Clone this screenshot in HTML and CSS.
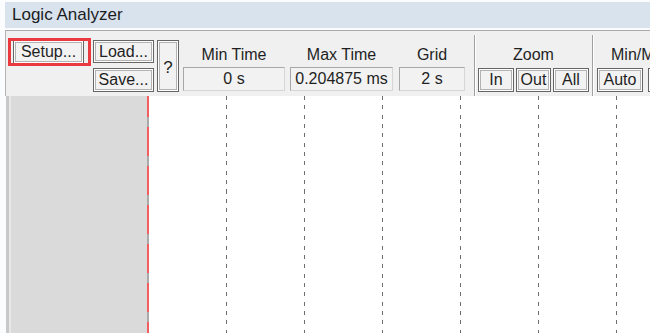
FILE: index.html
```html
<!DOCTYPE html>
<html lang="en">
<head>
  <meta charset="UTF-8">
  <title>Logic Analyzer</title>
  <link rel="stylesheet" href="styles.css">
</head>
<body>

  <div class="window">
    <div class="titlebar">Logic Analyzer</div>

    <div class="toolbar">
      <div class="setup-wrap">
        <button class="btn btn-setup">Setup...</button>
        <span class="highlight"></span>
      </div>

      <div class="load-save">
        <button class="btn btn-file">Load...</button>
        <button class="btn btn-file btn-save">Save...</button>
      </div>

      <button class="btn btn-help">?</button>

      <div class="group group-min">
        <span class="label">Min Time</span>
        <span class="field">0 s</span>
      </div>
      <div class="group group-max">
        <span class="label">Max Time</span>
        <span class="field">0.204875 ms</span>
      </div>
      <div class="group group-grid">
        <span class="label">Grid</span>
        <span class="field">2 s</span>
      </div>

      <div class="sep sep-zoom"></div>

      <div class="group group-zoom">
        <span class="label">Zoom</span>
        <div class="btn-row">
          <button class="btn btn-small btn-in">In</button>
          <button class="btn btn-small btn-out">Out</button>
          <button class="btn btn-small btn-all">All</button>
        </div>
      </div>

      <div class="sep sep-minmax"></div>

      <div class="group group-minmax">
        <span class="label">Min/Max</span>
        <div class="btn-row btn-row-wide">
          <button class="btn btn-small btn-auto">Auto</button>
          <button class="btn btn-small btn-undo">Undo</button>
        </div>
      </div>
    </div>

    <div class="plot">
      <div class="signals"></div>
      <div class="cursor"></div>
      <div class="waves">
        <div class="grid-col"></div>
        <div class="grid-col"></div>
        <div class="grid-col"></div>
        <div class="grid-col"></div>
        <div class="grid-col"></div>
        <div class="grid-col"></div>
        <div class="grid-col"></div>
      </div>
    </div>
  </div>

</body>
</html>
```

FILE: styles.css
```css
* {
  margin: 0;
  padding: 0;
  box-sizing: border-box;
}

body {
  font-family: 'Liberation Sans', Arial, sans-serif;
  background-color: #fbfcfd;
  width: 650px;
  height: 333px;
  overflow: hidden;
  color: #1f1f1f;
}

.window {
  width: 820px;
  height: 333px;
  margin-left: 5px;
  display: flex;
  flex-direction: column;
}

.titlebar {
  margin-top: 2px;
  height: 26px;
  line-height: 26px;
  padding-left: 7px;
  font-size: 17px;
  color: #1c1c1c;
  background-color: #d9e3ee;
}

.toolbar {
  margin-top: 2px;
  height: 66px;
  display: flex;
  align-items: flex-start;
  padding: 9px 0 0 7px;
  background-color: #f0f0f0;
  border-top: 1px solid #a9a9a9;
  border-left: 1px solid #b5b5b5;
}

.btn {
  font-family: inherit;
  font-size: 16px;
  color: #1f1f1f;
  background-color: #f2f2f2;
  border: 1px solid #666666;
  box-shadow: inset 0 0 0 1px #fdfdfd, inset 0 0 0 2px #b3b3b3;
  display: flex;
  align-items: center;
  justify-content: center;
  flex-shrink: 0;
}

/* red annotation box round Setup */
.setup-wrap {
  position: relative;
  flex-shrink: 0;
}

.btn-setup {
  width: 71px;
  height: 24px;
}

.highlight {
  position: absolute;
  left: -5px;
  top: -2px;
  right: -7px;
  bottom: -2px;
  border: 3px solid #ea3a3f;
}

.load-save {
  margin-left: 9px;
  display: flex;
  flex-direction: column;
  gap: 5px;
  flex-shrink: 0;
}

.btn-file {
  width: 61px;
  height: 23px;
}

.btn-save {
  height: 24px;
}

.btn-help {
  margin-left: 3px;
  width: 22px;
  height: 52px;
  font-size: 17px;
  padding-top: 4px;
}

.group {
  display: flex;
  flex-direction: column;
  align-items: center;
  flex-shrink: 0;
}

.label {
  margin-top: 6px;
  height: 18px;
  line-height: 18px;
  font-size: 16px;
  white-space: nowrap;
}

.field {
  margin-top: 3px;
  width: 100%;
  height: 24px;
  line-height: 22px;
  text-align: center;
  font-size: 16px;
  white-space: nowrap;
  background-color: #f2f2f2;
  border: 1px solid #d6d6d6;
  border-top-color: #a7a7a7;
  border-left-color: #a7a7a7;
}

.group-min {
  margin-left: 4px;
  width: 102px;
}

.group-max {
  margin-left: 5px;
  width: 103px;
}

.group-grid {
  margin-left: 6px;
  width: 66px;
}

.sep {
  margin-top: -5px;
  width: 2px;
  height: 62px;
  border-left: 1px solid #a0a0a0;
  border-right: 1px solid #ffffff;
  flex-shrink: 0;
}

.sep-zoom {
  margin-left: 9px;
  margin-right: 2px;
}

.sep-minmax {
  margin-left: 3px;
  margin-right: 3px;
}

.btn-row {
  margin-top: 4px;
  display: flex;
  gap: 2px;
}

.btn-row-wide {
  gap: 5px;
}

.btn-small {
  height: 24px;
}

.btn-in,
.btn-all {
  width: 36px;
}

.btn-out {
  width: 35px;
}

.btn-auto {
  width: 46px;
}

.btn-undo {
  width: 50px;
}

.group-minmax {
  align-items: flex-start;
}

.group-minmax .label {
  margin-left: 14px;
}

.plot {
  flex: 1;
  display: flex;
  margin-left: 1px;
  background-color: #ffffff;
}

.signals {
  width: 141px;
  background-color: #dadada;
  border-left: 3px solid #c8c8c8;
  box-shadow: inset 2px 0 0 #e7e7e7;
}

.cursor {
  width: 2px;
  background-image: repeating-linear-gradient(to bottom, #f45e5e 0 21px, #a9a9a9 21px 31px, #f45e5e 31px 39px);
}

.waves {
  flex: 1;
  display: flex;
}

.grid-col {
  width: 78px;
  flex-shrink: 0;
  background-image: repeating-linear-gradient(to bottom, #6f6f6f 0 4px, transparent 4px 9.35px);
  background-size: 2px 100%;
  background-repeat: no-repeat;
  background-position: 77px 0;
}
```
